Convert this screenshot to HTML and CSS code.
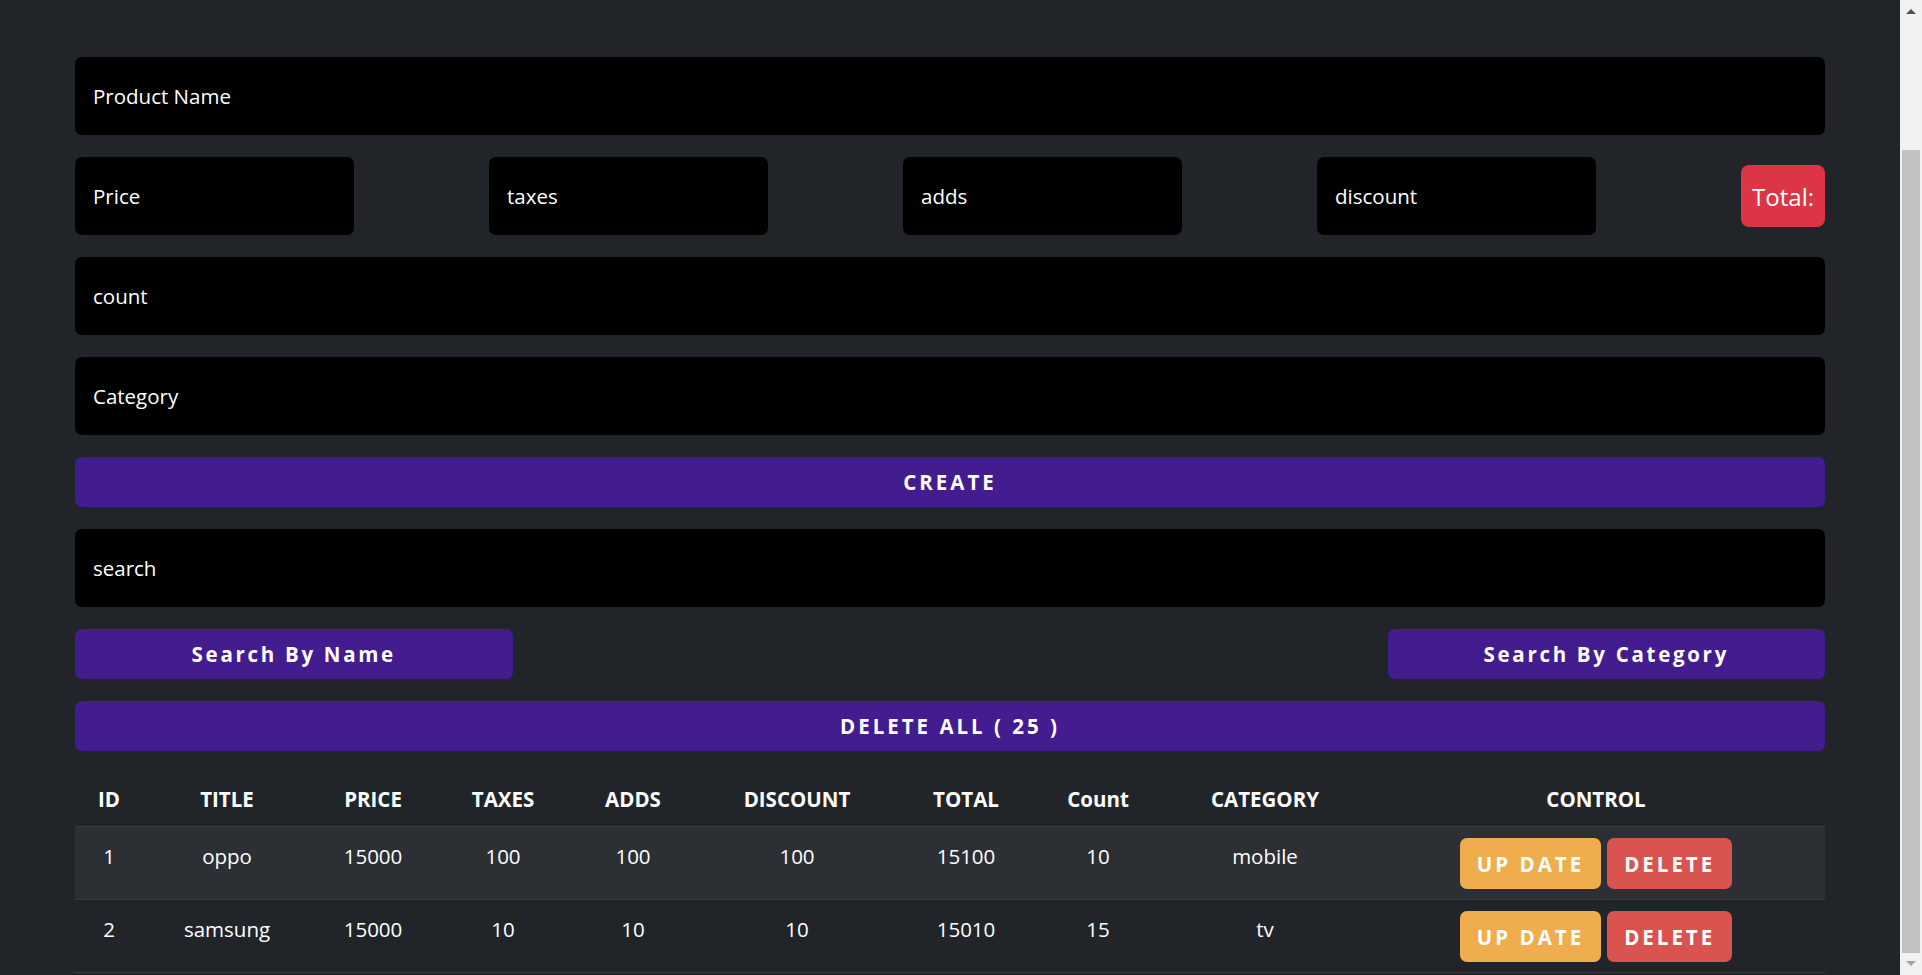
FILE: index.html
```html
<!DOCTYPE html>
<html lang="en">
<head>
<meta charset="utf-8">
<title>CRUDS</title>
<link rel="stylesheet" href="styles.css">
</head>
<body>
<div class="page">
  <main class="crud">
    <input class="field" type="text" placeholder="Product Name">
    <div class="price-row">
      <input class="field field-small" type="number" placeholder="Price">
      <input class="field field-small" type="number" placeholder="taxes">
      <input class="field field-small" type="number" placeholder="adds">
      <input class="field field-small" type="number" placeholder="discount">
      <span class="total">Total:</span>
    </div>
    <input class="field" type="number" placeholder="count">
    <input class="field" type="text" placeholder="Category">
    <button class="btn-main">CREATE</button>
    <input class="field" type="text" placeholder="search">
    <div class="search-row">
      <button class="btn-main btn-half">Search By Name</button>
      <button class="btn-main btn-half">Search By Category</button>
    </div>
    <button class="btn-main">DELETE ALL ( 25 )</button>
    <table class="products">
      <thead>
        <tr>
          <th class="c-id">ID</th>
          <th class="c-title">TITLE</th>
          <th class="c-price">PRICE</th>
          <th class="c-taxes">TAXES</th>
          <th class="c-adds">ADDS</th>
          <th class="c-discount">DISCOUNT</th>
          <th class="c-total">TOTAL</th>
          <th class="c-count">Count</th>
          <th class="c-category">CATEGORY</th>
          <th class="c-control">CONTROL</th>
        </tr>
      </thead>
      <tbody>
        <tr class="striped">
          <td>1</td>
          <td>oppo</td>
          <td>15000</td>
          <td>100</td>
          <td>100</td>
          <td>100</td>
          <td>15100</td>
          <td>10</td>
          <td>mobile</td>
          <td class="controls"><button class="btn-row btn-update">UP DATE</button><button class="btn-row btn-delete">DELETE</button></td>
        </tr>
        <tr>
          <td>2</td>
          <td>samsung</td>
          <td>15000</td>
          <td>10</td>
          <td>10</td>
          <td>10</td>
          <td>15010</td>
          <td>15</td>
          <td>tv</td>
          <td class="controls"><button class="btn-row btn-update">UP DATE</button><button class="btn-row btn-delete">DELETE</button></td>
        </tr>
      </tbody>
    </table>
  </main>
</div>
<div class="scrollbar" aria-hidden="true">
  <span class="sb-arrow sb-up"></span>
  <span class="sb-thumb"></span>
  <span class="sb-arrow sb-down"></span>
</div>
</body>
</html>
```

FILE: styles.css
```css
* {
  box-sizing: border-box;
}

html {
  background: #212529;
}

body {
  margin: 0;
  background: #212529;
  color: #fff;
  font-family: "Open Sans", "Noto Sans", sans-serif;
  font-size: 20.5px;
}

.page {
  padding: 57px 97px 0 75px;
}

.crud {
  max-width: 1750px;
  display: flex;
  flex-direction: column;
  gap: 22px;
}

.field {
  display: block;
  width: 100%;
  height: 78px;
  padding: 0 18px;
  background: #000;
  color: #fff;
  border: none;
  border-radius: 7px;
  outline: none;
  font-family: inherit;
  font-size: 20.5px;
  -moz-appearance: textfield;
}

.field::-webkit-outer-spin-button,
.field::-webkit-inner-spin-button {
  -webkit-appearance: none;
  margin: 0;
}

.field::placeholder {
  color: #fff;
  opacity: 1;
}

.price-row {
  display: flex;
  align-items: center;
  gap: 135px;
}

.field-small {
  width: 279px;
  flex: none;
}

.total {
  margin-left: auto;
  height: 62px;
  padding: 0 11px;
  display: flex;
  align-items: center;
  background: #dc3545;
  border-radius: 8px;
  font-size: 24px;
  color: #fff;
}

.btn-main {
  display: block;
  width: 100%;
  height: 50px;
  border: none;
  border-radius: 7px;
  background: #431c8f;
  color: #fff;
  font-family: inherit;
  font-size: 20.5px;
  font-weight: 700;
  letter-spacing: 3px;
  cursor: pointer;
}

.search-row {
  display: flex;
  justify-content: space-between;
}

.btn-half {
  width: 25%;
  letter-spacing: 2.7px;
}

.products {
  width: 100%;
  border-collapse: collapse;
  table-layout: fixed;
  text-align: center;
}

.products th {
  padding: 10px 4px;
  line-height: 33px;
  font-weight: 700;
  border-bottom: 1px solid #373b3e;
}

.products td {
  padding: 11px 4px 10px;
  line-height: 36px;
  vertical-align: top;
  border-bottom: 1px solid #373b3e;
}

.products tr.striped td {
  background: #2c3034;
}

.c-id { width: 68px; }
.c-title { width: 168px; }
.c-price { width: 124px; }
.c-taxes { width: 136px; }
.c-adds { width: 124px; }
.c-discount { width: 204px; }
.c-total { width: 134px; }
.c-count { width: 130px; }
.c-category { width: 204px; }
.c-control { width: auto; }

.controls {
  white-space: nowrap;
}

.btn-row {
  display: inline-block;
  height: 51px;
  padding: 0 17px;
  margin: 0 3px;
  border: none;
  border-radius: 7px;
  color: #fff;
  font-family: inherit;
  font-size: 20.5px;
  font-weight: 700;
  letter-spacing: 3px;
  vertical-align: top;
  cursor: pointer;
}

.btn-update {
  background: #f0ad4e;
}

.btn-delete {
  background: #d9534f;
}

/* browser scrollbar as seen in the capture */
.scrollbar {
  position: fixed;
  top: 0;
  right: 0;
  width: 22px;
  height: 100vh;
  background: #f1f1f1;
  display: flex;
  flex-direction: column;
  align-items: center;
}

.sb-arrow {
  width: 0;
  height: 0;
  border-left: 5px solid transparent;
  border-right: 5px solid transparent;
}

.sb-up {
  margin-top: 9px;
  border-bottom: 5px solid #505050;
}

.sb-thumb {
  width: 18px;
  height: 803px;
  margin-top: 136px;
  background: #c1c1c1;
}

.sb-down {
  margin-top: auto;
  margin-bottom: 9px;
  border-top: 5px solid #a3a3a3;
}
```
